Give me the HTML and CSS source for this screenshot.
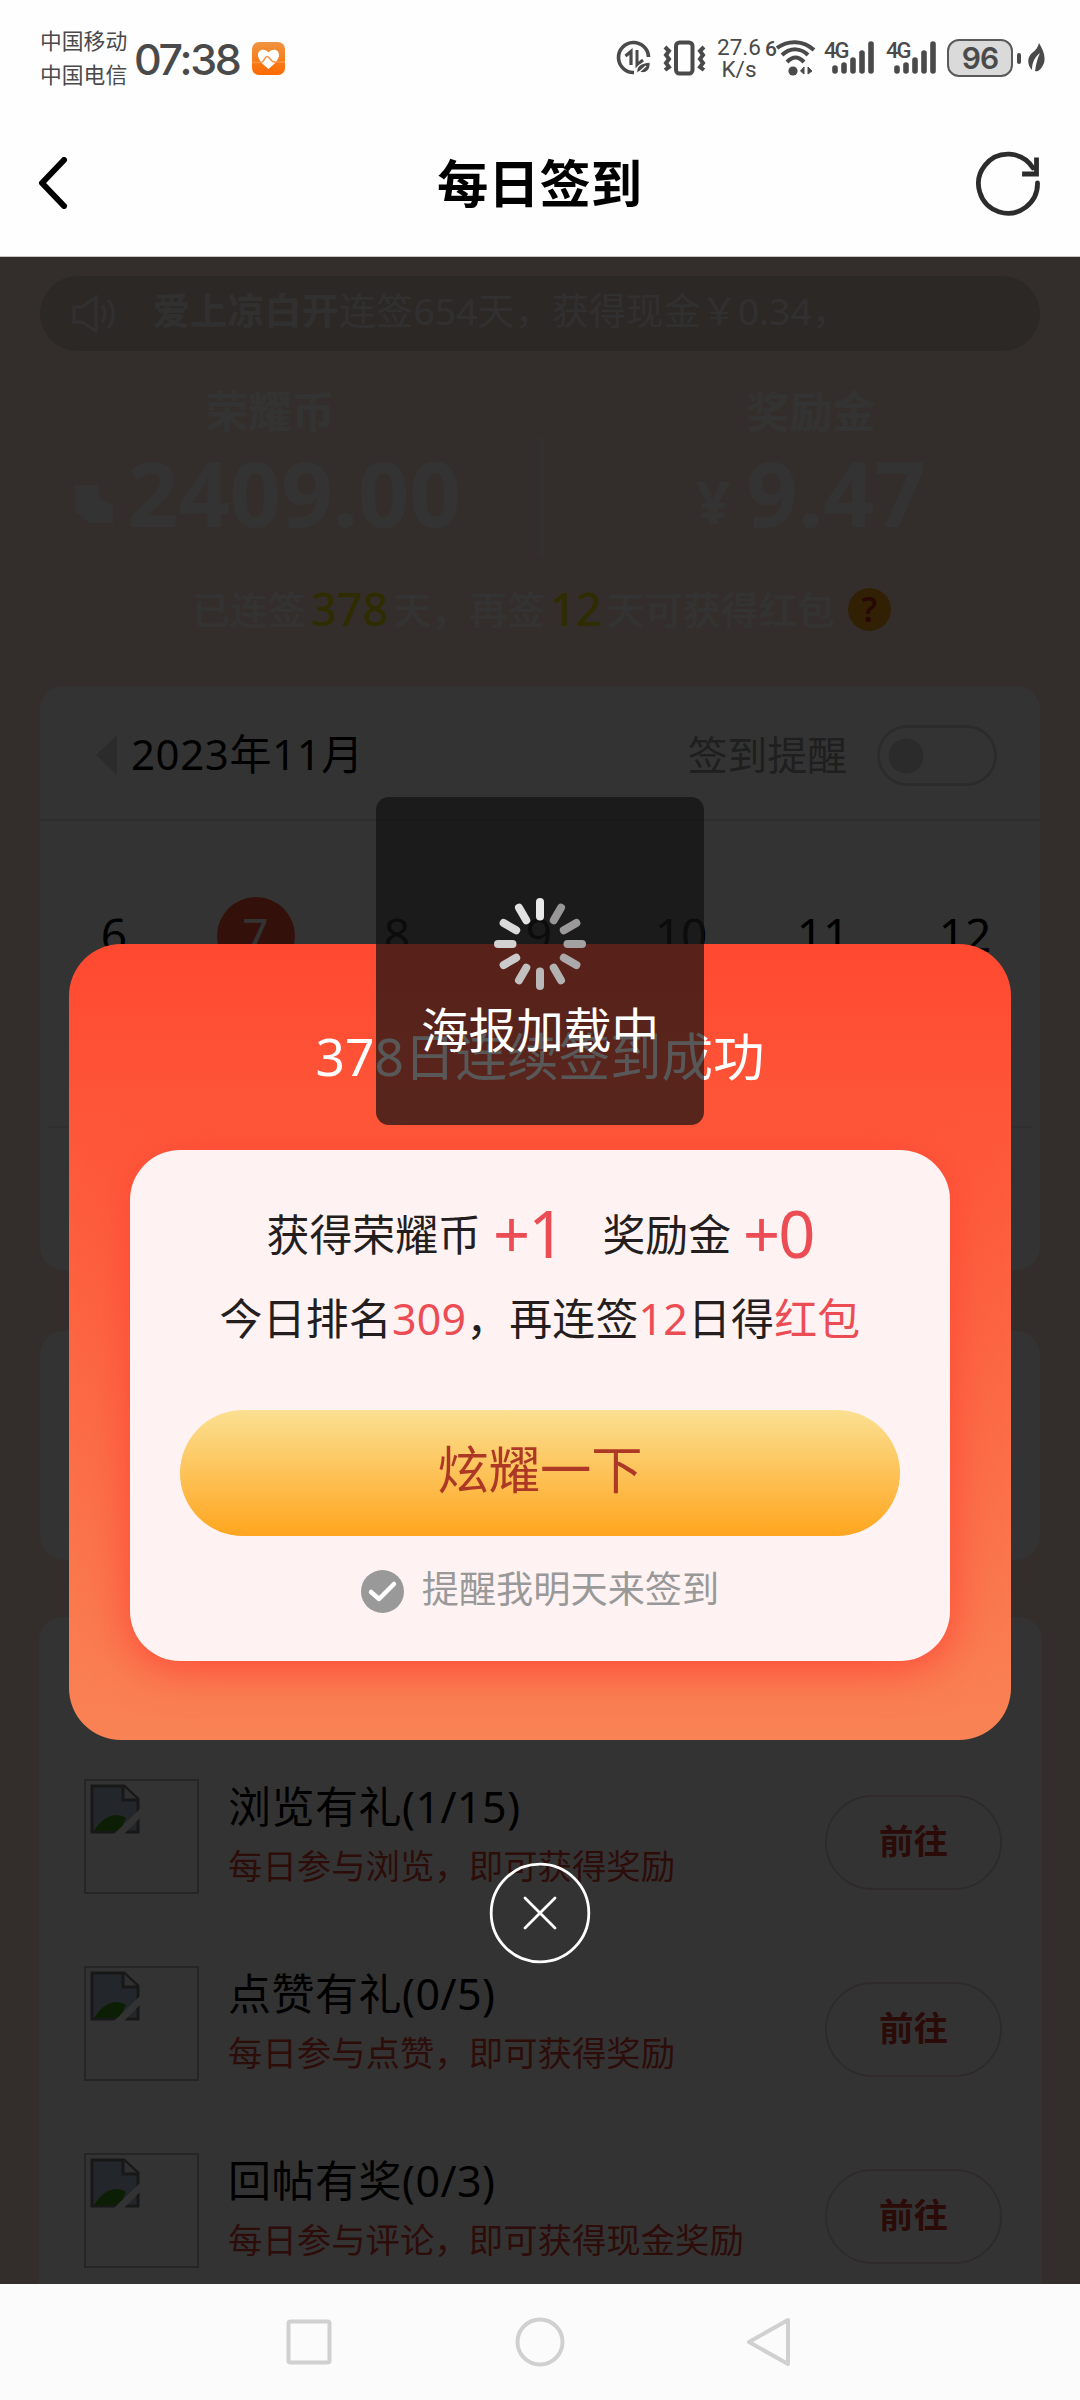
FILE: index.html
```
<!DOCTYPE html>
<html lang="zh-CN">
<head>
<meta charset="utf-8">
<title>每日签到</title>
<link rel="stylesheet" href="styles.css">
</head>
<body>
<svg class="defs" width="0" height="0">
  <symbol id="broken" viewBox="0 0 50 50">
    <path d="M2 2H34L48 15V48H2Z" fill="#b0c0d4" stroke="#777" stroke-width="3"/>
    <path d="M4 47C14 30 28 28 36 34L30 47Z" fill="#3f9a1c"/>
    <path d="M33 2V16H48" fill="#e8e8e8" stroke="#777" stroke-width="3"/>
    <path d="M24 50L50 25V34L34 50Z" fill="#fff"/>
  </symbol>
  <symbol id="bars" viewBox="0 0 52 36">
    <g stroke="#4a4a4a" stroke-width="5.6" stroke-linecap="round"><path d="M11 28V31M20 25V31M29 20V31M38 13V31M47 4V31"/></g>
  </symbol>
</svg>

<header class="status">
  <div class="carriers"><span>中国移动</span><span>中国电信</span></div>
  <span class="clock">07:38</span>
  <svg class="health" width="33" height="33" viewBox="0 0 33 33">
    <defs><linearGradient id="hg" x1="0" y1="0" x2="0" y2="1"><stop offset="0" stop-color="#ee9440"/><stop offset="1" stop-color="#ff6a00"/></linearGradient></defs>
    <rect width="33" height="33" rx="7" fill="url(#hg)"/>
    <path d="M16.500 27C9 21 6 17 6 13C6 7 13 6 16.500 10.500C20 6 27 7 27 13C27 17 24 21 16.500 27Z" fill="#fff"/>
    <path d="M0 20.500H9C12 20.500 12.500 14.500 15 14.500S19 20 22 20H33" fill="none" stroke="#fb9440" stroke-width="1.600"/>
  </svg>
  <div class="tray">
    <svg class="saver" width="36" height="36" viewBox="0 0 36 36" fill="none" stroke="#4a4a4a">
      <path d="M32.500 17A15 15 0 1 0 18 32.500" stroke-width="3.600"/>
      <path d="M9.500 16L15 11.500V25" stroke-width="3.200"/>
      <path d="M21 10V25L27 20" stroke-width="3"/>
      <path d="M21 34C19 25 26 23 34 22C35 29 31 35 23 32Z" fill="#4a4a4a" stroke="#fefefe" stroke-width="1.200"/>
      <path d="M21 34L30 26" stroke="#fff" stroke-width="1.300"/>
    </svg>
    <svg class="vibrate" width="43" height="36" viewBox="0 0 43 36" fill="none" stroke="#4a4a4a" stroke-width="4">
      <rect x="13" y="2.500" width="16.500" height="31" rx="3.500"/>
      <path d="M2 7L6 11L3 15L6 19L3 23L6 27L2 30M41 7L37 11L40 15L37 19L40 23L37 27L41 30"/>
    </svg>
    <div class="speed"><span>27.6</span><span>K/s</span></div>
    <div class="wifi">
      <span class="gen">6</span>
      <svg width="40" height="36" viewBox="0 0 40 36" fill="none" stroke="#4a4a4a" stroke-width="4">
        <path d="M1 8C12 0 27 0 38 10M6 15C15 7 25 8 32 15M11 22C17 16 22 16 28 22"/>
        <circle cx="17" cy="31" r="4.600" fill="#4a4a4a" stroke="none"/>
        <path d="M28 27V34L24.500 31ZM32 27V34L36 31Z" fill="#4a4a4a" stroke-width="1"/>
      </svg>
    </div>
    <div class="sim"><span>4G</span><svg width="52" height="36"><use href="#bars"/></svg></div>
    <div class="sim"><span>4G</span><svg width="52" height="36"><use href="#bars"/></svg></div>
    <div class="battery"><span>96</span></div>
    <i class="nub"></i>
    <svg class="leaf" width="17" height="30" viewBox="0 0 17 30"><path d="M11 0C16 8 19 17 14 24C12 27 10 29 7 28C8 22 9 16 12 10C7 14 4 19 4 27C-1 22 -1 14 4 10C8 7 10 4 11 0Z" fill="#4a4a4a"/></svg>
  </div>
</header>

<nav class="titlebar">
  <svg width="30" height="52" viewBox="0 0 30 52" fill="none" stroke="#000" stroke-width="6" stroke-linecap="round" stroke-linejoin="round"><path d="M26 3L4 26L26 49"/></svg>
  <h1>每日签到</h1>
  <svg width="66" height="66" viewBox="0 0 66 66" fill="none" stroke="#2c2c2c" stroke-width="4.800" stroke-linecap="round"><path d="M62.500 33A29.500 29.500 0 1 1 58 18"/><path d="M61.500 10V24H49.500" stroke-linecap="square"/></svg>
</nav>

<main class="page">
  <section class="notice">
    <svg width="44" height="38" viewBox="0 0 44 38" fill="none" stroke="#f3eef5" stroke-width="3"><path d="M2 12H10L24 2V36L10 27H2ZM30 11C34 15 34 23 30 27M36 5C43 12 43 26 36 33"/></svg>
    <p><b>爱上凉白开</b>连签654天，获得现金￥0.34，</p>
  </section>

  <section class="wallet">
    <div class="asset">
      <h2>荣耀币</h2>
      <div class="amount coins"><svg width="44" height="50" viewBox="0 0 44 50"><path d="M4 8H28V22L42 28V46H18L4 34Z" fill="#fff"/></svg><strong>2409.00</strong></div>
    </div>
    <div class="asset reward">
      <h2>奖励金</h2>
      <div class="amount"><small>¥</small><strong>9.47</strong></div>
    </div>
  </section>
  <p class="streak">已连签<em>378</em>天，再签<em>12</em>天可获得红包<i>?</i></p>

  <section class="card calendar">
    <div class="cal-head">
      <i class="prev"></i><span class="month">2023年11月</span>
      <span class="remind">签到提醒</span><i class="switch"></i>
    </div>
    <div class="days"><span>6</span><span class="on">7</span><span>8</span><span>9</span><span>10</span><span>11</span><span>12</span></div>
    <hr>
  </section>
  <section class="card banner"></section>
  <section class="card tasks">
    <div class="task"><div class="thumb"><svg width="50" height="50"><use href="#broken"/></svg></div><div class="info"><h3>浏览有礼(1/15)</h3><p>每日参与浏览，即可获得奖励</p></div><button>前往</button></div>
    <div class="task"><div class="thumb"><svg width="50" height="50"><use href="#broken"/></svg></div><div class="info"><h3>点赞有礼(0/5)</h3><p>每日参与点赞，即可获得奖励</p></div><button>前往</button></div>
    <div class="task"><div class="thumb"><svg width="50" height="50"><use href="#broken"/></svg></div><div class="info"><h3>回帖有奖(0/3)</h3><p>每日参与评论，即可获得现金奖励</p></div><button>前往</button></div>
  </section>

  <div class="mask">
    <section class="modal">
      <h2>378日连续签到成功</h2>
      <div class="panel">
        <p class="gain">获得荣耀币<em>+1</em><span>奖励金</span><em>+0</em></p>
        <p class="rank">今日排名<em>309</em>，再连签<em>12</em>日得<em>红包</em></p>
        <button class="show">炫耀一下</button>
        <label><svg width="43" height="43" viewBox="0 0 43 43"><circle cx="21.500" cy="21.500" r="21.500" fill="#999"/><path d="M10 22L18 29L33 14" fill="none" stroke="#fff" stroke-width="4.500" stroke-linecap="round" stroke-linejoin="round"/></svg>提醒我明天来签到</label>
      </div>
    </section>
    <svg class="close" width="102" height="102" viewBox="0 0 102 102" fill="none" stroke="#fff" stroke-width="2.800" stroke-linecap="round"><circle cx="51" cy="51" r="48.800"/><path d="M36 36L66 66M66 36L36 66"/></svg>
  </div>

  <div class="toast">
    <svg width="94" height="94" viewBox="-47 -47 94 94" stroke-width="8" stroke-linecap="round">
      <path stroke="#e9e9e9" d="M0 -42V-27.500"/>
      <path stroke="#989697" d="M0 -42V-27.500" transform="rotate(30)"/>
      <path stroke="#9b999a" d="M0 -42V-27.500" transform="rotate(60)"/>
      <path stroke="#a3a1a2" d="M0 -42V-27.500" transform="rotate(90)"/>
      <path stroke="#aba9aa" d="M0 -42V-27.500" transform="rotate(120)"/>
      <path stroke="#b2b2b2" d="M0 -42V-27.500" transform="rotate(150)"/>
      <path stroke="#bab8b9" d="M0 -42V-27.500" transform="rotate(180)"/>
      <path stroke="#c2c0c1" d="M0 -42V-27.500" transform="rotate(210)"/>
      <path stroke="#cbcbcb" d="M0 -42V-27.500" transform="rotate(240)"/>
      <path stroke="#d2d2d2" d="M0 -42V-27.500" transform="rotate(270)"/>
      <path stroke="#dadada" d="M0 -42V-27.500" transform="rotate(300)"/>
      <path stroke="#e2e2e2" d="M0 -42V-27.500" transform="rotate(330)"/>
    </svg>
    <p>海报加载中</p>
  </div>
</main>

<footer class="sysnav">
  <svg width="50" height="50" viewBox="0 0 50 50"><rect x="4.500" y="4.500" width="41" height="41" rx="2"/></svg>
  <svg width="50" height="50" viewBox="0 0 50 50"><circle cx="25" cy="25" r="22.500"/></svg>
  <svg width="50" height="50" viewBox="0 0 50 50"><path d="M3 25L42 3V47Z"/></svg>
</footer>
</body>
</html>
```

FILE: styles.css
```
* { box-sizing: border-box; margin: 0; padding: 0; }
body {
  width: 1080px; height: 2400px; overflow: hidden;
  display: flex; flex-direction: column;
  background: #fefefe; color: #000;
  font-family: "Noto Sans", "Noto Sans CJK SC", sans-serif;
}
em, i { font-style: normal; }
svg { display: block; flex: none; }
.defs { position: absolute; }
button { border: 0; background: none; font-family: inherit; }

/* status bar */
.status { height: 116px; display: flex; align-items: center; padding-left: 40px; color: #4a4a4a; }
.carriers { width: 88px; display: flex; flex-direction: column; font-size: 21.800px; line-height: 34px; white-space: nowrap; }
.clock { margin-left: 6px; width: 112px; font: 500 43px/60px Inter, "Noto Sans", sans-serif; letter-spacing: -2.300px; padding-top: 2px; }
.health { margin-left: 6px; }
.tray { margin-left: 331px; display: flex; align-items: center; }
.vibrate { margin-left: 11px; }
.speed { margin-left: 10px; width: 46px; display: flex; flex-direction: column; align-items: center; font: 22.500px/22px Roboto, sans-serif; }
.wifi { display: flex; margin-left: 3px; }
.gen { font: 500 21px/18px Roboto, sans-serif; width: 11px; }
.sim { position: relative; margin-left: 8px; width: 52px; }
.sim + .sim { margin-left: 10px; }
.sim span { position: absolute; left: 0; top: -1px; font: 500 22px/24px Roboto, sans-serif; letter-spacing: -2px; }
.battery { margin-left: 9px; width: 66px; height: 38px; border: 2.500px solid #5a5a5a; border-radius: 12px; background: #dadada; display: flex; align-items: center; justify-content: center; font: 600 30px/30px Inter, sans-serif; letter-spacing: -1px; }
.nub { width: 4px; height: 11px; margin-left: 4px; border-radius: 2px; background: #4a4a4a; }
.leaf { margin-left: 7px; }

/* title bar */
.titlebar { height: 141px; display: flex; align-items: center; justify-content: space-between; padding: 6px 39px 13px 38px; border-bottom: 1px solid #c9c5c4; }
.titlebar svg:first-child { margin-right: 36px; }
.titlebar h1 { font-size: 51.300px; line-height: 70px; font-weight: 700; padding-top: 1px; }

/* page */
.page { position: relative; height: 2027px; overflow: hidden; background: #ffe6d7; padding: 19px 40px 0; }
.notice { height: 75px; border-radius: 38px; background: #d9c5bc; display: flex; align-items: center; padding-left: 32px; color: #f3eef5; }
.notice p { margin-left: 37px; font-size: 37px; line-height: 50px; margin-top: -6px; letter-spacing: .2px; white-space: nowrap; }
.wallet { display: flex; height: 230px; color: #fff; }
.asset { flex: none; width: 500px; padding: 31px 40px 0 0; text-align: center; }
.asset.reward { padding: 31px 0 0 42px; background: linear-gradient(#fbf5f0, #fbf5f0) 0 87px / 4px 120px no-repeat; }
.asset h2 { font-size: 43px; line-height: 60px; }
.amount { display: flex; align-items: flex-end; justify-content: center; margin-top: 2px; }
.coins { padding-right: 8px; }
.amount svg { margin: 0 12px 13px 0; }
.amount strong { font-size: 90px; line-height: 96px; font-weight: 700; letter-spacing: 0; }
.amount small { font-size: 60px; line-height: 78px; font-weight: 700; margin-right: 16px; }
.streak { height: 105px; display: flex; align-items: center; padding: 0 0 41px 152px; margin-top: -4px; font-size: 38px; line-height: 64px; font-weight: 500; color: #fff; white-space: nowrap; }
.streak em { font-size: 45px; color: #e6dc00; margin: 0 5px; }
.streak i { width: 43px; height: 43px; margin-left: 13px; border-radius: 50%; background: #f5a014; color: #c8281e; font: 600 34px/43px "Noto Sans", sans-serif; text-align: center; }
.card { background: #fff; border-radius: 24px; }
.calendar { height: 584px; margin-top: 4px; }
.cal-head { height: 135px; border-bottom: 2px solid #e3e3e3; display: flex; align-items: center; padding: 5px 43px 0 56px; }
.prev { border: solid transparent; border-width: 20px 21px 20px 0; border-right-color: #d5d5d5; }
.month { margin-left: 14px; font-size: 42px; line-height: 60px; letter-spacing: .600px; padding-bottom: 3px; }
.remind { margin-left: auto; margin-right: 30px; font-size: 39.800px; line-height: 60px; color: #999; padding-bottom: 1px; }
.switch { width: 120px; height: 61px; border: 3px solid #d8d8d8; border-radius: 31px; background: radial-gradient(circle at 26px 28px, #d8d8d8 17px, transparent 18px); }
.days { display: flex; padding: 76px 4px 0 3px; height: 305px; }
.days span { flex: 1; text-align: center; font-size: 46px; line-height: 74px; }
.days .on { flex: none; width: 78px; height: 78px; margin: 0 31.500px; border-radius: 50%; background: #ff5033; color: #fff; }
.calendar hr { border: 0; border-top: 2px solid #e8e8e8; margin: 0 8px; }
.banner { height: 229px; margin-top: 61px; }
.tasks { height: 700px; margin: 57px -2px 0 -1px; padding: 162px 40px 0 45px; }
.task { height: 187px; display: flex; align-items: flex-start; }
.thumb { width: 115px; height: 115px; border: 2px solid #bbb; padding: 3px 4px; }
.info { margin-left: 29px; white-space: nowrap; }
.info h3 { font-size: 43px; line-height: 56px; font-weight: 400; letter-spacing: .500px; }
.info p { font-size: 34.400px; line-height: 56px; color: #e04034; margin-top: 3px; }
.task button { margin: 16px 0 0 auto; width: 177px; height: 95px; border: 2px solid #e3cfcd; border-radius: 48px; font-size: 34.500px; line-height: 88px; padding-bottom: 3px; font-weight: 700; color: #d8382c; }

/* dialog */
.mask { position: absolute; inset: 0; background: rgba(0, 0, 0, .8); display: flex; flex-direction: column; align-items: center; padding-top: 687px; }
.modal { width: 942px; height: 796px; border-radius: 52px; background: linear-gradient(#ff4930, #f98355); padding: 77px 61px 0; }
.modal h2 { font-size: 51.500px; line-height: 70px; font-weight: 400; color: #fff; text-align: center; margin-bottom: 59px; }
.panel { height: 511px; border-radius: 50px; background: #fef3f2; box-shadow: 0 6px 46px #ff4636; display: flex; flex-direction: column; align-items: center; color: #241e1e; font-size: 42.900px; white-space: nowrap; }
.panel em { color: #ec4c53; }
.gain { margin-top: 40px; height: 90px; line-height: 90px; display: flex; align-items: center; }
.gain em { font-size: 65px; margin: 0 0 5px 12px; letter-spacing: -2px; }
.gain span { margin-left: 39px; }
.rank { height: 76px; line-height: 78px; letter-spacing: .200px; }
.show { width: 720px; height: 126px; margin-top: 54px; border-radius: 63px; background: linear-gradient(#fbe092, #ffa51e); color: #ad3826; font-size: 51.300px; line-height: 118px; padding-bottom: 8px; }
.panel label { margin-top: 30px; display: flex; align-items: center; font-size: 37.200px; line-height: 46px; color: #999; gap: 18px; height: 46px; }
.panel label svg { margin-top: 4px; }
.close { margin-top: 122px; }

/* loading toast */
.toast { position: absolute; left: 376px; top: 540px; width: 328px; height: 328px; border-radius: 13px; background: rgba(17, 17, 17, .7); display: flex; flex-direction: column; align-items: center; padding-top: 100px; color: #fff; }
.toast p { font-size: 47.600px; line-height: 70px; margin-top: 4px; }

/* system navigation */
.sysnav { flex: 1; background: #fbfbfb; display: flex; justify-content: center; gap: 181px; padding-top: 33px; }
.sysnav svg { fill: none; stroke: #d0d0d0; stroke-width: 4; stroke-linejoin: round; }
```
